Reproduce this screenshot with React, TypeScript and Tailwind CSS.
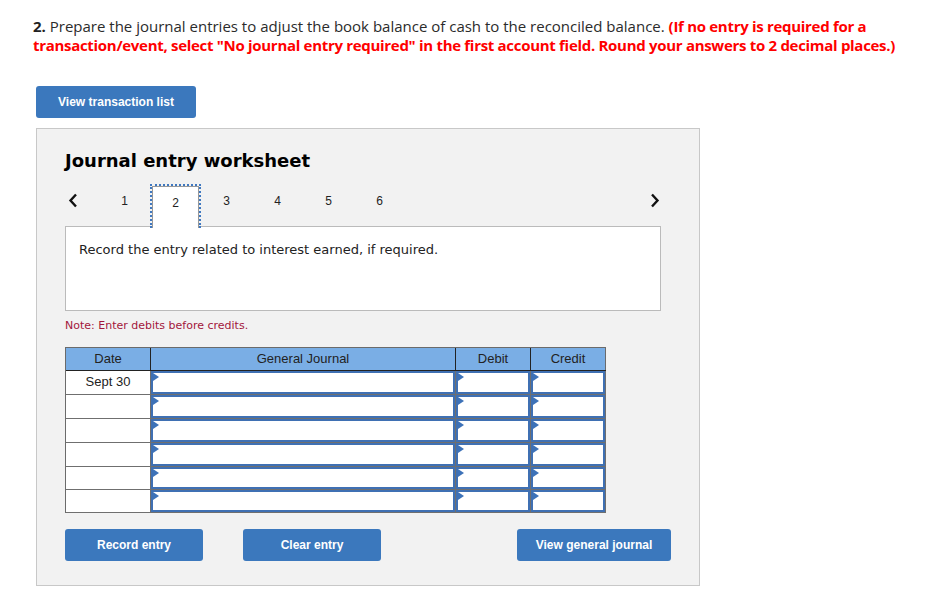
import React from "react";

const arial = { fontFamily: '"Liberation Sans", Arial, sans-serif' };

function Tri() {
  return (
    <span className="absolute left-0 top-0 w-0 h-0 border-y-[4px] border-y-transparent border-l-[6px] border-l-[#3d72b8]" />
  );
}

function InputCell({ w }: { w: string }) {
  return (
    <div className={`${w} h-full border-r border-[#6f6f6f] flex`}>
      <div className="relative flex-1 border-2 border-[#3f70b3] bg-white">
        <Tri />
      </div>
    </div>
  );
}

function Btn({ label, w }: { label: string; w: string }) {
  return (
    <button
      className={`${w} h-[32px] rounded-[3px] bg-[#3b78bd] text-white text-[12px] font-bold`}
      style={arial}
    >
      {label}
    </button>
  );
}

export default function App() {
  const rows: [string, string][] = [
    ["Sept 30", "h-[24px]"],
    ["", "h-[24px]"],
    ["", "h-[24px]"],
    ["", "h-[24px]"],
    ["", "h-[23px]"],
    ["", "h-[23px]"],
  ];
  return (
    <div className="min-h-[616px] bg-white pt-[17px] pl-[33px]">
      <p
        className="text-[15px] leading-[19px] text-[#2b2b2b] w-[880px]"
        style={{ fontFamily: '"Open Sans", Lato, sans-serif' }}
      >
        <b className="font-bold text-[#222]">2.</b> Prepare the journal entries to adjust the book balance of cash to the reconciled balance.{" "}
        <b className="font-bold text-[#ff0000] tracking-[-0.3px]">
          (If no entry is required for a transaction/event, select "No journal entry required" in the first account field. Round your answers to 2 decimal places.)
        </b>
      </p>

      <div className="mt-[31px] ml-[3px]">
        <Btn label="View transaction list" w="w-[160px]" />
      </div>

      <div className="ml-[3px] mt-[10px] w-[664px] border border-[#c8c8c8] bg-[#f2f2f2] pl-[28px] pt-[21px] pb-[24px]">
        <h2
          className="text-[18px] leading-[22px] font-bold text-black"
          style={{ fontFamily: '"DejaVu Sans", Verdana, sans-serif' }}
        >
          Journal entry worksheet
        </h2>

        <div className="mt-[12px] flex items-stretch h-[43px] w-[595px] relative z-10 -mb-px" style={arial}>
          <div className="w-[34px] flex items-center pl-[3px] pb-[10px]">
            <svg width="10" height="15" viewBox="0 0 10 15">
              <path d="M8 1.5 L2.5 7.5 L8 13.5" fill="none" stroke="#111" strokeWidth="2.4" />
            </svg>
          </div>
          {[1, 2, 3, 4, 5, 6].map((n) =>
            n === 2 ? (
              <div key={n} className="w-[51px] flex justify-center">
                <div className="w-[53px] h-[44px] border-2 border-dotted border-[#3f78c0] border-b-0">
                  <div className="h-full border border-b-0 border-[#999] bg-white flex items-center justify-center text-[12px] text-[#222] pb-[10px]">
                    {n}
                  </div>
                </div>
              </div>
            ) : (
              <div key={n} className="w-[51px] flex items-center justify-center text-[12px] text-[#222] pb-[10px]">
                {n}
              </div>
            )
          )}
          <div className="flex-1 flex items-center justify-end pb-[10px]">
            <svg width="10" height="15" viewBox="0 0 10 15">
              <path d="M2 1.5 L7.5 7.5 L2 13.5" fill="none" stroke="#111" strokeWidth="2.4" />
            </svg>
          </div>
        </div>

        <div className="w-[596px] h-[85px] border border-[#bbbbbb] bg-white pl-[13px] pt-[15px]">
          <p
            className="text-[13px] leading-[16px] text-[#222]"
            style={{ fontFamily: '"DejaVu Sans", Verdana, sans-serif' }}
          >
            Record the entry related to interest earned, if required.
          </p>
        </div>

        <p
          className="mt-[7px] text-[11px] leading-[15px] text-[#a3163c]"
          style={{ fontFamily: '"DejaVu Sans", Verdana, sans-serif' }}
        >
          Note: Enter debits before credits.
        </p>

        <div className="mt-[14px] w-[541px] border-l border-t border-[#6b6b6b]" style={arial}>
          <div className="flex h-[23px] bg-[#7aaee5] text-[13px] text-[#222] border-b border-[#222]">
            <div className="w-[85px] border-r border-[#222] flex items-center justify-center">Date</div>
            <div className="w-[305px] border-r border-[#222] flex items-center justify-center">General Journal</div>
            <div className="w-[75px] border-r border-[#222] flex items-center justify-center">Debit</div>
            <div className="w-[75px] border-r border-[#6b6b6b] flex items-center justify-center">Credit</div>
          </div>
          {rows.map(([d, h], i) => (
            <div key={i} className={`flex ${h} border-b border-[#6f6f6f]`}>
              <div className="w-[85px] h-full border-r border-[#6f6f6f] bg-white text-center text-[13px] text-[#222] leading-[22px]">
                {d}
              </div>
              <InputCell w="w-[305px]" />
              <InputCell w="w-[75px]" />
              <InputCell w="w-[75px]" />
            </div>
          ))}
        </div>

        <div className="mt-[16px] flex">
          <Btn label="Record entry" w="w-[138px]" />
          <div className="ml-[40px]">
            <Btn label="Clear entry" w="w-[138px]" />
          </div>
          <div className="ml-[136px]">
            <Btn label="View general journal" w="w-[154px]" />
          </div>
        </div>
      </div>
    </div>
  );
}
